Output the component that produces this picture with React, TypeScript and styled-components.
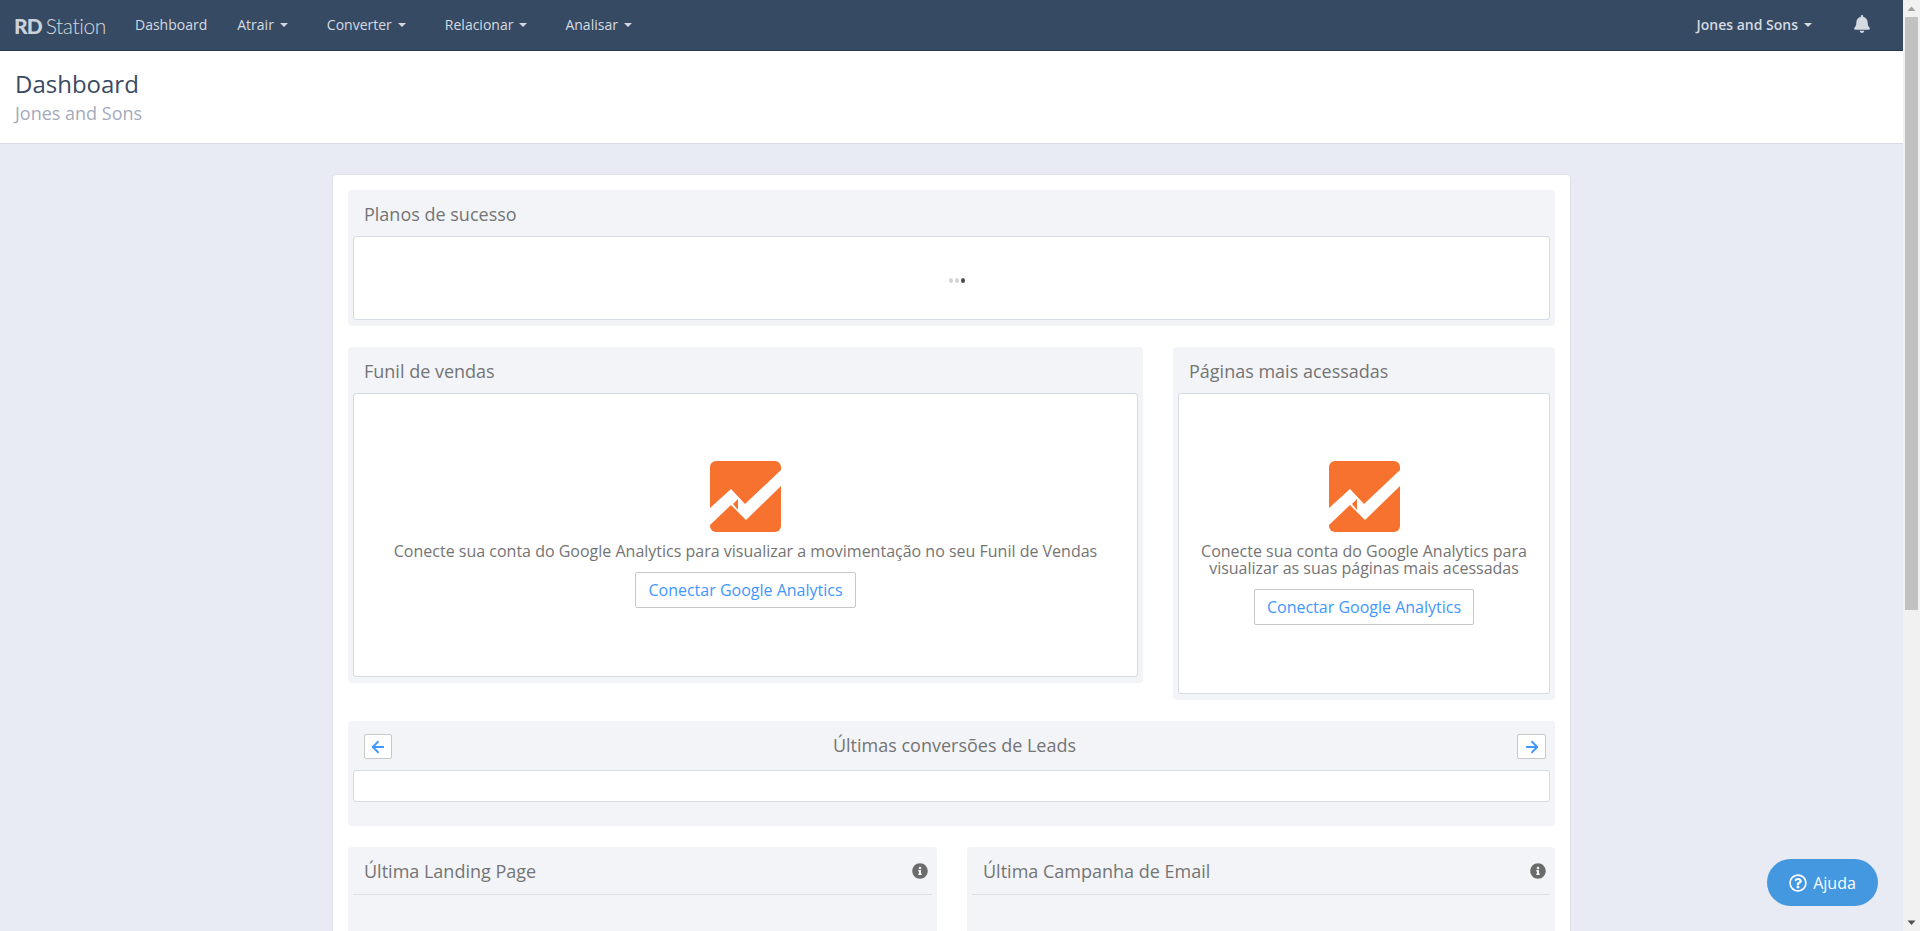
import React from "react";
import styled, { createGlobalStyle } from "styled-components";
import { ArrowLeft, ArrowRight } from "lucide-react";
import { FaBell, FaInfoCircle, FaRegQuestionCircle } from "react-icons/fa";

const Global = createGlobalStyle`
  html, body { margin: 0; padding: 0; }
  body {
    background: #e8ebf3;
    font-family: "Open Sans", "Liberation Sans", sans-serif;
    color: #747474;
  }
  * { box-sizing: border-box; }
`;

const Page = styled.div`
  min-height: 1408px;
  display: flex;
  flex-direction: column;
  padding-right: 17px;
`;

const Navbar = styled.nav`
  height: 51px;
  background: #364a63;
  border-bottom: 1px solid #2a3b50;
  display: flex;
  align-items: center;
  padding: 0 0 2px 14px;
  color: #d5dae1;
  font-size: 14px;
`;

const Logo = styled.div`
  font-family: Lato, "Liberation Sans", sans-serif;
  font-size: 21px;
  color: #d3d8df;
  font-weight: 300;
  width: 106px;
  padding-top: 2px;
  letter-spacing: -0.4px;
  b { font-weight: 900; letter-spacing: -1px; margin-right: 4px; color: #ccd2da; }
`;

const NavItem = styled.a<{ $gap?: number }>`
  margin-left: ${(p) => p.$gap ?? 15}px;
  white-space: nowrap;
  display: flex;
  align-items: center;
`;

const Caret = styled.span`
  display: inline-block;
  width: 0;
  height: 0;
  margin-left: 6px;
  margin-top: 2px;
  border-top: 4px solid currentColor;
  border-left: 4px solid transparent;
  border-right: 4px solid transparent;
`;

const NavRight = styled.div`
  margin-left: auto;
  display: flex;
  align-items: center;
  padding-right: 32px;
`;

const Account = styled.a`
  font-weight: 600;
  display: flex;
  align-items: center;
  margin-right: 41px;
  font-size: 14px;
`;

const Header = styled.header`
  height: 93px;
  background: #fff;
  border-bottom: 1px solid #d8dbe3;
  padding: 19px 15px 0;
`;

const Title = styled.h1`
  margin: 0;
  font-size: 24px;
  line-height: 28px;
  font-weight: 400;
  color: #3a4a63;
`;

const Subtitle = styled.div`
  font-size: 18px;
  line-height: 28px;
  margin-top: 1px;
  color: #a5aaba;
`;

const Card = styled.main`
  width: 1239px;
  margin: 30px auto 0;
  background: #fff;
  border: 1px solid #dde0e8;
  border-radius: 4px;
  padding: 15px;
  flex: 1;
`;

const Section = styled.section<{ $width?: number }>`
  background: #f3f4f8;
  border-radius: 4px;
  padding: 0 5px 6px;
  ${(p) => (p.$width ? `width: ${p.$width}px; flex: none;` : "")}
`;

const SectionTitle = styled.h2`
  margin: 0;
  height: 46px;
  padding-left: 11px;
  font-size: 18px;
  font-weight: 400;
  line-height: 48px;
  color: #747474;
`;

const Inner = styled.div<{ $height?: number }>`
  background: #fff;
  border: 1px solid #d6dae3;
  border-radius: 3px;
  ${(p) => (p.$height ? `height: ${p.$height}px;` : "")}
`;

const Loader = styled(Inner)`
  display: flex;
  align-items: center;
  justify-content: center;
  gap: 2px;
  padding: 4px 0 0 11px;
`;

const Dot = styled.span<{ $active?: boolean }>`
  width: 4px;
  height: 5px;
  border-radius: 50%;
  background: ${(p) => (p.$active ? "#4a4a4a" : "#d4d4d4")};
`;

const Row = styled.div<{ $gap: number }>`
  display: flex;
  align-items: flex-start;
  gap: ${(p) => p.$gap}px;
  margin-top: 21px;
`;

const Empty = styled(Inner)`
  display: flex;
  flex-direction: column;
  align-items: center;
  padding: 67px 16px 68px;
`;

const Message = styled.p`
  margin: 11px 0 0;
  font-size: 16px;
  line-height: 17px;
  text-align: center;
  color: #747474;
`;

const ConnectButton = styled.button`
  margin-top: 12px;
  height: 36px;
  padding: 0 12px;
  background: #fff;
  border: 1px solid #c8c8c8;
  border-radius: 2px;
  font-family: inherit;
  font-size: 16px;
  color: #3f97ff;
`;

const ConversionSection = styled(Section)`
  padding-bottom: 24px;
  margin-top: 21px;
`;

const ConversionHeader = styled.div`
  height: 49px;
  display: flex;
  align-items: center;
  justify-content: space-between;
  padding: 2px 4px 0 11px;
`;

const CenterTitle = styled.h2`
  margin: 0;
  padding-bottom: 4px;
  font-size: 18px;
  font-weight: 400;
  color: #747474;
`;

const ArrowButton = styled.button<{ $width: number }>`
  width: ${(p) => p.$width}px;
  height: 25px;
  padding: 0;
  background: #fff;
  border: 1px solid #c8c8c8;
  border-radius: 2px;
  color: #3f97ff;
  display: flex;
  align-items: center;
  justify-content: center;
`;

const TileHeader = styled.div`
  height: 48px;
  display: flex;
  align-items: center;
  justify-content: space-between;
  padding: 0 4px 0 11px;
  border-bottom: 1px solid #dcdfe6;
  color: #6b6b6b;
`;

const TileTitle = styled.h2`
  margin: 0;
  font-size: 18px;
  font-weight: 400;
  color: #747474;
`;

const TileBody = styled.div`
  height: 415px;
`;

const HelpButton = styled.button`
  position: fixed;
  right: 42px;
  bottom: 25px;
  width: 111px;
  height: 47px;
  border: 0;
  border-radius: 24px;
  background: #4498e0;
  color: #fff;
  font-family: inherit;
  font-size: 16px;
  display: flex;
  align-items: center;
  justify-content: center;
  gap: 6px;
`;

const Scrollbar = styled.div`
  position: fixed;
  top: 0;
  right: 0;
  bottom: 0;
  width: 17px;
  background: #f1f1f1;
  display: flex;
  flex-direction: column;
  align-items: center;
`;

const ScrollArrow = styled.svg`
  width: 17px;
  height: 17px;
  flex: none;
`;

const ScrollThumb = styled.div`
  width: 13px;
  height: 593px;
  background: #c1c1c1;
`;

const ScrollSpace = styled.div`
  flex: 1;
`;

const AnalyticsIcon = () => (
  <svg width="71" height="71" viewBox="0 0 71 71">
    <rect width="71" height="71" rx="6" fill="#f7722e" />
    <polygon points="0,47 21,28 35,43 71,9 71,25 36,59 21,44 0,64" fill="#fff" />
    <polygon points="28,38 28,49 23,43" fill="#f7722e" />
  </svg>
);

const menus = [
  { label: "Atrair", gap: 30 },
  { label: "Converter", gap: 39 },
  { label: "Relacionar", gap: 39 },
  { label: "Analisar", gap: 38 },
];

export default function App() {
  return (
    <Page>
      <Global />
      <Navbar>
        <Logo>
          <b>RD</b>Station
        </Logo>
        <NavItem $gap={15}>Dashboard</NavItem>
        {menus.map((m) => (
          <NavItem key={m.label} $gap={m.gap}>
            {m.label}
            <Caret />
          </NavItem>
        ))}
        <NavRight>
          <Account>
            Jones and Sons
            <Caret />
          </Account>
          <FaBell size={18} color="#d5dae1" />
        </NavRight>
      </Navbar>
      <Header>
        <Title>Dashboard</Title>
        <Subtitle>Jones and Sons</Subtitle>
      </Header>
      <Card>
        <Section>
          <SectionTitle>Planos de sucesso</SectionTitle>
          <Loader $height={84}>
            <Dot />
            <Dot />
            <Dot $active />
          </Loader>
        </Section>
        <Row $gap={30}>
          <Section $width={795}>
            <SectionTitle>Funil de vendas</SectionTitle>
            <Empty>
              <AnalyticsIcon />
              <Message>Conecte sua conta do Google Analytics para visualizar a movimentação no seu Funil de Vendas</Message>
              <ConnectButton>Conectar Google Analytics</ConnectButton>
            </Empty>
          </Section>
          <Section $width={382}>
            <SectionTitle>Páginas mais acessadas</SectionTitle>
            <Empty>
              <AnalyticsIcon />
              <Message>Conecte sua conta do Google Analytics para visualizar as suas páginas mais acessadas</Message>
              <ConnectButton>Conectar Google Analytics</ConnectButton>
            </Empty>
          </Section>
        </Row>
        <ConversionSection>
          <ConversionHeader>
            <ArrowButton $width={28} aria-label="Anterior">
              <ArrowLeft size={18} strokeWidth={2.4} />
            </ArrowButton>
            <CenterTitle>Últimas conversões de Leads</CenterTitle>
            <ArrowButton $width={29} aria-label="Próximo">
              <ArrowRight size={18} strokeWidth={2.4} />
            </ArrowButton>
          </ConversionHeader>
          <Inner $height={32} />
        </ConversionSection>
        <Row $gap={30}>
          <Section $width={589}>
            <TileHeader>
              <TileTitle>Última Landing Page</TileTitle>
              <FaInfoCircle size={16} />
            </TileHeader>
            <TileBody />
          </Section>
          <Section $width={588}>
            <TileHeader>
              <TileTitle>Última Campanha de Email</TileTitle>
              <FaInfoCircle size={16} />
            </TileHeader>
            <TileBody />
          </Section>
        </Row>
      </Card>
      <HelpButton>
        <FaRegQuestionCircle size={18} />
        Ajuda
      </HelpButton>
      <Scrollbar>
        <ScrollArrow viewBox="0 0 17 17">
          <polygon points="4.5,11 12.5,11 8.5,6.5" fill="#a3a3a3" />
        </ScrollArrow>
        <ScrollThumb />
        <ScrollSpace />
        <ScrollArrow viewBox="0 0 17 17">
          <polygon points="4.5,6.5 12.5,6.5 8.5,11" fill="#505050" />
        </ScrollArrow>
      </Scrollbar>
    </Page>
  );
}
